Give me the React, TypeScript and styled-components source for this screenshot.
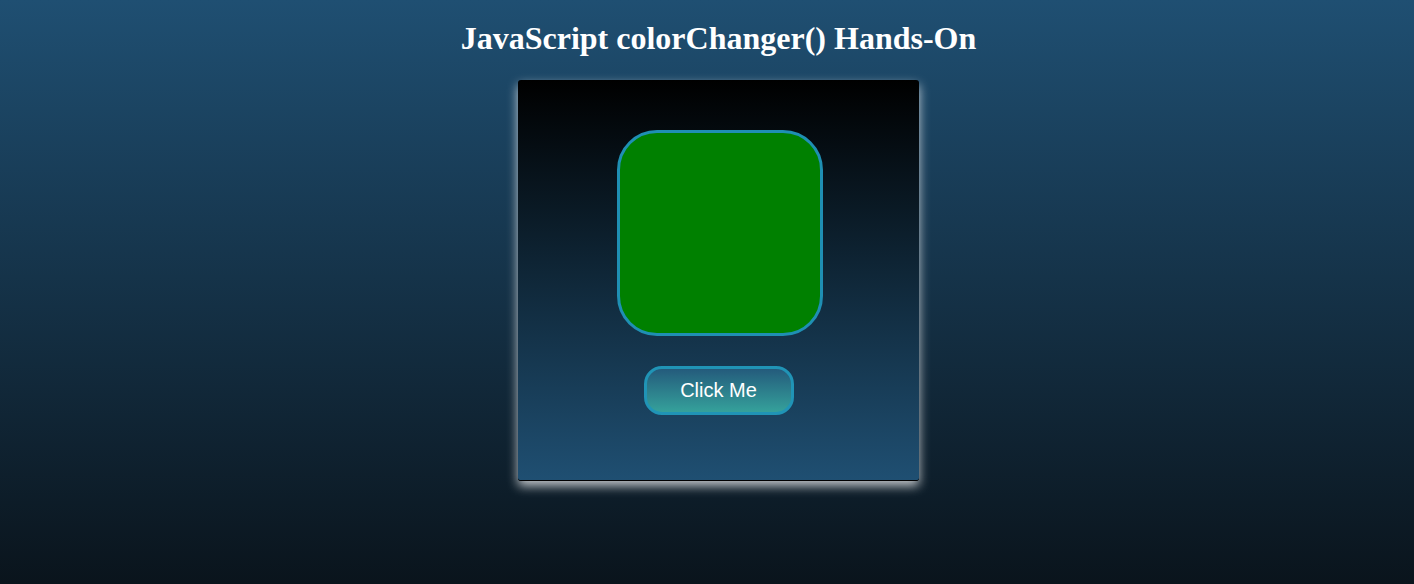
import React, { useState } from "react";
import styled, { createGlobalStyle } from "styled-components";

const Global = createGlobalStyle`
  html, body { margin: 0; padding: 0; }
  body {
    min-height: 584px;
    background: linear-gradient(to bottom, #1f4f72 0%, #0a141c 100%);
    font-family: "Liberation Serif", "Times New Roman", serif;
    color: #fff;
  }
`;

const Page = styled.div`
  display: flex;
  flex-direction: column;
  align-items: center;
  padding-left: 23px;
  min-height: 584px;
  box-sizing: border-box;
`;

const Title = styled.h1`
  font-family: "Liberation Serif", "Times New Roman", serif;
  font-size: 32px;
  font-weight: bold;
  color: #fff;
  margin: 20px 0 22.88px;
`;

const Card = styled.div`
  width: 401px;
  height: 401px;
  box-sizing: border-box;
  border-radius: 3px;
  border-bottom: 1px solid #000;
  background: linear-gradient(to bottom, #000 0%, #1f4f72 100%);
  box-shadow: 0 5px 11px rgba(255, 255, 255, 0.75);
  display: flex;
  flex-direction: column;
  align-items: center;
  padding-top: 50px;
`;

const ColorBox = styled.div<{ $color: string }>`
  width: 206px;
  height: 206px;
  box-sizing: border-box;
  border: 3px solid #1f8fb3;
  border-radius: 40px;
  background: ${(p) => p.$color};
  margin-left: 2px;
`;

const Button = styled.button`
  margin-top: 30px;
  width: 150px;
  height: 49px;
  box-sizing: border-box;
  border: 3px solid #2094b6;
  border-radius: 18px;
  background: linear-gradient(to bottom, #245b7c 0%, #35a19b 100%);
  color: #fff;
  font-family: "Liberation Sans", Arial, sans-serif;
  font-size: 20px;
  cursor: pointer;
  padding: 0;
`;

const colors = ["green", "red", "blue", "orange", "purple"];

export default function App() {
  const [i, setI] = useState(0);
  return (
    <>
      <Global />
      <Page>
        <Title>JavaScript colorChanger() Hands-On</Title>
        <Card>
          <ColorBox $color={colors[i]} />
          <Button onClick={() => setI((i + 1) % colors.length)}>Click Me</Button>
        </Card>
      </Page>
    </>
  );
}
